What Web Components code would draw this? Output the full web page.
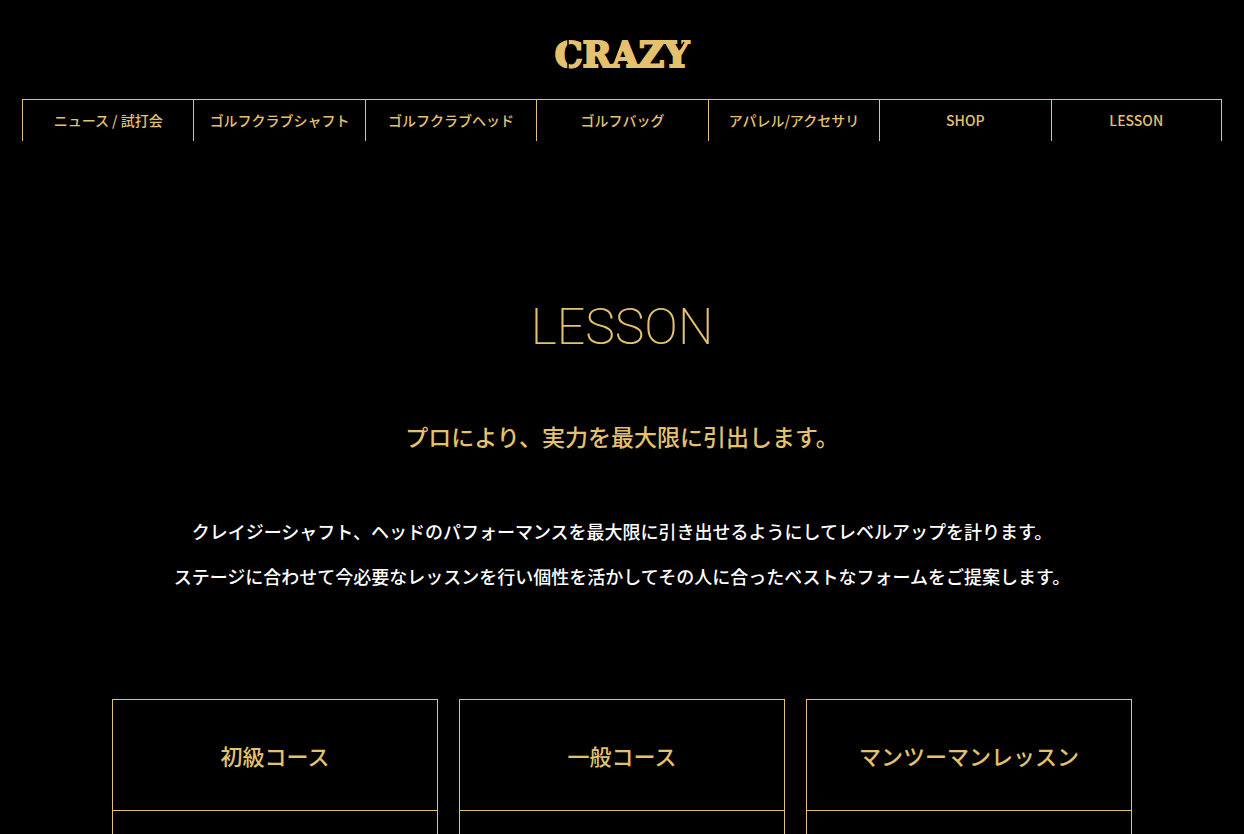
<!DOCTYPE html>
<html lang="ja">
<head>
<meta charset="utf-8">
<meta name="viewport" content="width=device-width, initial-scale=1">
<title>LESSON | CRAZY</title>
<style>
    :root {
        --gold: #e3c16f;
        --bg: #000;
    }

    body {
        margin: 0;
        color: #fff;
        background: var(--bg);
        font-family: "Noto Sans CJK JP", sans-serif;
        font-weight: 500;
    }
</style>
</head>
<body>
<site-header>
    <nav-item href="#news">ニュース / 試打会</nav-item>
    <nav-item href="#shaft">ゴルフクラブシャフト</nav-item>
    <nav-item href="#head">ゴルフクラブヘッド</nav-item>
    <nav-item href="#bag">ゴルフバッグ</nav-item>
    <nav-item href="#apparel">アパレル/アクセサリ</nav-item>
    <nav-item href="#shop">SHOP</nav-item>
    <nav-item href="#lesson">LESSON</nav-item>
</site-header>
<main>
    <lesson-intro>
        <span slot="title">LESSON</span>
        <span slot="lead">プロにより、実力を最大限に引出します。</span>
        クレイジーシャフト、ヘッドのパフォーマンスを最大限に引き出せるようにしてレベルアップを計ります。<br>
        ステージに合わせて今必要なレッスンを行い個性を活かしてその人に合ったベストなフォームをご提案します。
    </lesson-intro>
    <course-list>
        <course-card>初級コース</course-card>
        <course-card>一般コース</course-card>
        <course-card>マンツーマンレッスン</course-card>
    </course-list>
</main>

<script>
(function () {
    function define(name, html, Base = HTMLElement) {
        const template = document.createElement('template');
        template.innerHTML = html;

        customElements.define(name, class extends Base {
            constructor() {
                super();
                this.attachShadow({ mode: 'open' });
                this.shadowRoot.appendChild(template.content.cloneNode(true));
            }
        });
    }

    // Serif capitals with the stencil bridges cut out of them
    define('site-logo', `
  <style>
    :host {
        display: block;
    }

    a,
    svg {
        display: block;
    }

    text {
        fill: var(--gold);
        stroke: var(--gold);
        stroke-width: 2;
        font: bold 35px "DejaVu Serif", serif;
    }

    path {
        fill: none;
        stroke: var(--bg);
        stroke-width: 1.5;
    }
  </style>

  <a href="#top" aria-label="CRAZY">
    <svg width="160" height="52" viewBox="0 0 160 52">
      <text x="80" y="39" text-anchor="middle">CRAZY</text>
      <path d="M26 10V18M26 33V42M78 16L71 35M138 21L142 14"/>
    </svg>
  </a>
`);

    define('site-header', `
  <style>
    :host {
        display: block;
    }

    header {
        display: flex;
        flex-direction: column;
        align-items: center;
        gap: 19px;
        padding: 28px 22px 0;
    }

    nav {
        display: grid;
        grid-auto-flow: column;
        grid-auto-columns: 1fr;
        width: 100%;
        max-width: 1200px;
        border-top: 1px solid var(--gold);
    }

    ::slotted(:last-child) {
        border-right: 1px solid var(--gold);
    }
  </style>

  <header>
    <site-logo></site-logo>
    <nav><slot></slot></nav>
  </header>
`);

    class LinkElement extends HTMLElement {
        connectedCallback() {
            this.shadowRoot.querySelector('a').href = this.getAttribute('href') || '#';
        }
    }

    define('nav-item', `
  <style>
    :host {
        display: block;
        border-left: 1px solid var(--gold);
    }

    a {
        display: block;
        color: var(--gold);
        font-size: 14px;
        line-height: 41px;
        text-align: center;
        text-decoration: none;
        white-space: nowrap;
    }

    a:hover {
        opacity: .7;
    }
  </style>

  <a><slot></slot></a>
`, LinkElement);

    define('lesson-intro', `
  <style>
    :host {
        display: block;
        padding: 156px 22px 100px;
        text-align: center;
    }

    h1,
    h2,
    p {
        margin: 0;
    }

    h1 {
        color: var(--gold);
        font: 200 50px/60px Roboto, sans-serif;
    }

    h2 {
        margin: 61px 0 55px;
        color: var(--gold);
        font-size: 23px;
        font-weight: 500;
        line-height: 36px;
    }

    p {
        font-size: 18px;
        line-height: 45px;
    }
  </style>

  <h1><slot name="title"></slot></h1>
  <h2><slot name="lead"></slot></h2>
  <p><slot></slot></p>
`);

    define('course-list', `
  <style>
    :host {
        display: grid;
        grid-template-columns: repeat(3, 1fr);
        gap: 21px;
        width: 82%;
        max-width: 1020px;
        margin: 0 auto;
    }
  </style>

  <slot></slot>
`);

    define('course-card', `
  <style>
    :host {
        display: block;
        border: 1px solid var(--gold);
    }

    h3 {
        margin: 0;
        padding: 38px 8px;
        color: var(--gold);
        font-size: 22px;
        font-weight: 500;
        line-height: 34px;
        text-align: center;
        border-bottom: 1px solid var(--gold);
    }

    .body {
        min-height: 240px;
    }
  </style>

  <h3><slot></slot></h3>
  <div class="body"></div>
`);
}())
</script>
</body>
</html>
